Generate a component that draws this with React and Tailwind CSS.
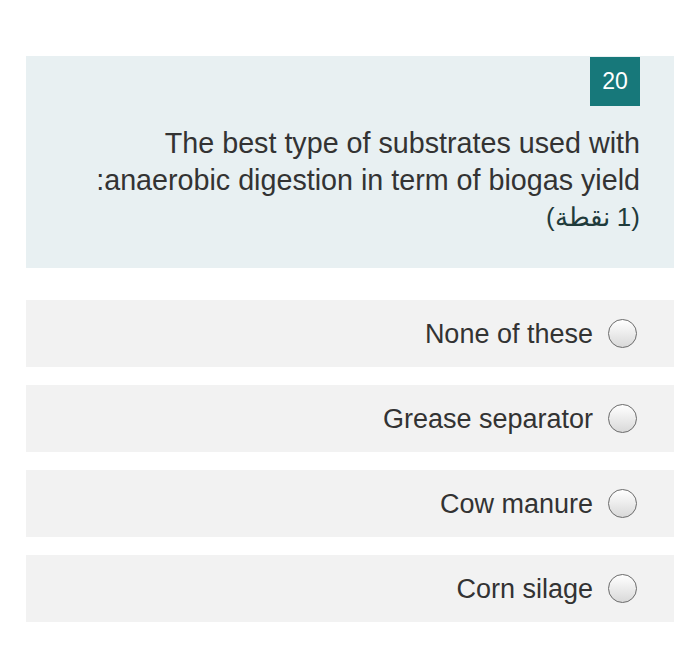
import React from "react";

const options = ["None of these", "Grease separator", "Cow manure", "Corn silage"];

function Radio() {
  return (
    <span className="inline-block h-[29px] w-[29px] shrink-0 rounded-full border-[1.5px] border-[#6b6b6b] bg-gradient-to-b from-white to-[#d9d9d9]" />
  );
}

export default function App() {
  return (
    <div className="min-h-[670px] w-[700px] bg-white pt-[56px] font-['Liberation_Sans',Arial,sans-serif] text-[#333]">
      <div className="mx-[26px] bg-[#e8f0f2] pb-[32px] pl-[20px] pr-[34px] pt-px">
        <div className="flex justify-end">
          <div className="flex h-[49px] w-[50px] items-center justify-center bg-[#17787a] text-[23px] text-white">
            20
          </div>
        </div>
        <div dir="rtl" className="mt-[19px] text-right text-[28.7px] leading-[37px]">
          <div>The best type of substrates used with</div>
          <div>anaerobic digestion in term of biogas yield:</div>
          <div className="text-[26px] text-[#1f3b3b]">(1 نقطة)</div>
        </div>
      </div>

      <div className="mx-[26px] mt-[32px] flex flex-col gap-[18px]">
        {options.map((o) => (
          <div key={o} dir="rtl" className="flex h-[67px] items-center gap-[15px] bg-[#f2f2f2] pr-[37px]">
            <Radio />
            <span className="pt-[1px] text-[27px]">{o}</span>
          </div>
        ))}
      </div>
    </div>
  );
}
